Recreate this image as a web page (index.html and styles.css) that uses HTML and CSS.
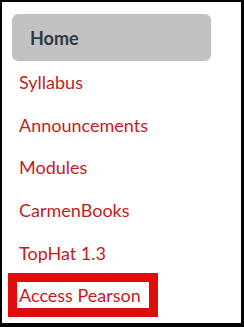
FILE: index.html
```html
<!DOCTYPE html>
<html lang="en">
<head>
<meta charset="utf-8">
<title>Course navigation</title>
<link rel="stylesheet" href="styles.css">
</head>
<body>
<div class="frame">
  <ul class="nav">
    <li class="nav-item active"><a href="#">Home</a></li>
    <li class="nav-item"><a href="#">Syllabus</a></li>
    <li class="nav-item"><a href="#">Announcements</a></li>
    <li class="nav-item"><a href="#">Modules</a></li>
    <li class="nav-item"><a href="#">CarmenBooks</a></li>
    <li class="nav-item"><a href="#">TopHat 1.3</a></li>
    <li class="nav-item"><span class="mark"><a href="#">Access Pearson</a></span></li>
  </ul>
</div>
</body>
</html>
```
FILE: styles.css
```css
* { box-sizing: border-box; }
html, body { margin: 0; padding: 0; background: #000; }
.frame {
  width: 244px;
  height: 327px;
  border-style: solid;
  border-color: #000;
  border-width: 2px 3px 4px 2px;
  background: #fff;
  overflow: hidden;
}
.nav {
  list-style: none;
  margin: 0;
  padding: 12px 0 0 10px;
  font-family: Lato, "Liberation Sans", sans-serif;
  font-size: 18px;
}
.nav-item {
  height: 42.6px;
  display: flex;
  align-items: center;
  padding-left: 7px;
}
.nav-item a {
  color: #c41c1c;
  text-decoration: none;
}
.nav-item.active {
  width: 199px;
  height: 47px;
  background: #c2c2c2;
  border-radius: 6px;
  padding-left: 18px;
  font-size: 18px;
}
.nav-item.active a {
  color: #2d3b45;
  font-weight: 700;
}
.mark {
  display: inline-block;
  border: 9px solid #e00c0c;
  margin-left: -11px;
  padding: 0 8px 0 2px;
  line-height: 26px;
}
```
